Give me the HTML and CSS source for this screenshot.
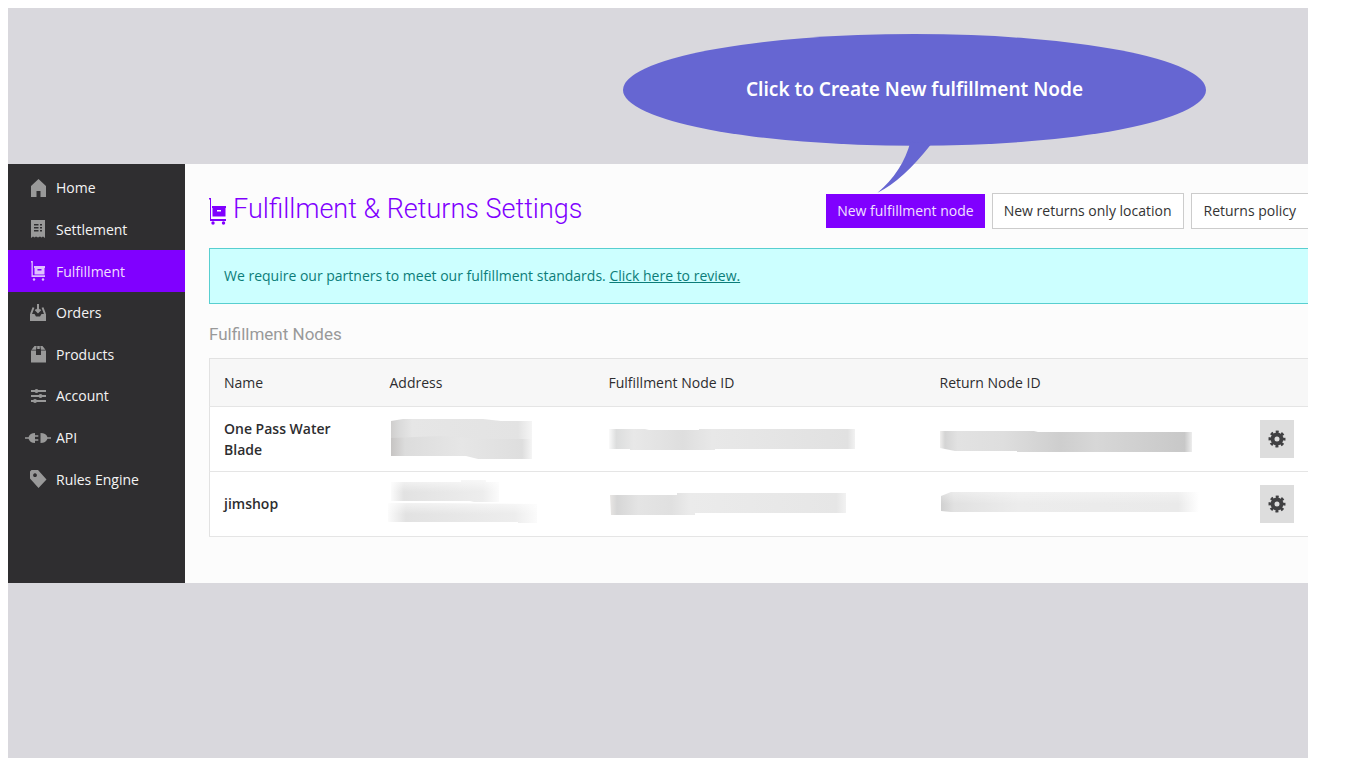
FILE: index.html
```html
<!DOCTYPE html>
<html lang="en">
<head>
<meta charset="utf-8">
<title>Fulfillment &amp; Returns Settings</title>
<link rel="stylesheet" href="styles.css">
</head>
<body>
<div class="stage">
  <div class="panel">
    <nav class="sidebar" aria-label="Main">
      <a class="nav-item" href="#"><svg class="nav-icon" viewBox="0 0 26 20"><path d="M13.500 1l7.500 7v11h-5.500v-6h-4v6H6V8z"/></svg>Home</a>
      <a class="nav-item" href="#"><svg class="nav-icon" viewBox="0 0 26 20"><path fill-rule="evenodd" d="M6 1h14v18l-2-1.500-1.500 1-1.500-1-2 1-2-1-1.500 1-1.500-1L6 19zM9 5v1.500h4.500V5zm0 3v1.500h4.500V8zm0 3v1.500h4.500V11zm6-6v1.500h2V5zm0 3v1.500h2V8zm0 3v1.500h2V11z"/></svg>Settlement</a>
      <a class="nav-item active" href="#" aria-current="page"><svg class="nav-icon" viewBox="0 0 26 20"><path fill-rule="evenodd" d="M6 0h1.800v14.300H20V16H6.500V1.500H6zM9 5h11v2h-.5v6.500H9.500V7H9zm3.500 3v1.500h4V8z"/><circle cx="9" cy="18.500" r="1.200"/><circle cx="18" cy="18.500" r="1.200"/></svg>Fulfillment</a>
      <a class="nav-item" href="#"><svg class="nav-icon" viewBox="0 0 26 20"><path d="M5 11h4.500l1.500 2.500h4l1.500-2.500H21v7H5z"/><path class="line" d="M13 1v8M10.500 6.500L13 9l2.500-2.500M8.500 4.500L6 11M17.500 4.500L20 11"/></svg>Orders</a>
      <a class="nav-item" href="#"><svg class="nav-icon" viewBox="0 0 26 20"><path d="M6 6.500h5V11h5V6.500h5v12H6zM6.500 5.700L9.500 2h2.200L11 5.700zM20.500 5.700L17.500 2h-2.200l.7 3.700z"/><path d="M12.200 2h2.600v3h-2.600z"/></svg>Products</a>
      <a class="nav-item" href="#"><svg class="nav-icon" viewBox="0 0 26 20"><path class="thin" d="M6 5h15M6 10h15M6 15h15"/><circle cx="11.500" cy="5" r="2"/><circle cx="15.500" cy="10" r="2"/><circle cx="10" cy="15" r="2"/></svg>Account</a>
      <a class="nav-item" href="#"><svg class="nav-icon" viewBox="0 0 26 20"><path d="M0 9.200h3.500Q5 5 10 5v2.200h3.300v1.500H10v2.600h3.300v1.500H10V15q-5 0-6.500-4.200H0zM15.500 5q5.500 0 7 4.200H26v1.600h-3.500q-1.500 4.200-7 4.200z"/></svg>API</a>
      <a class="nav-item" href="#"><svg class="nav-icon" viewBox="0 0 26 20"><path fill-rule="evenodd" d="M5 2.500L6.500 1H13l8.500 9.500L13.500 19 5 9.500zm5 1.800a1.900 1.900 0 1 0 .01 0z"/></svg>Rules Engine</a>
    </nav>
    <main class="content">
      <header class="page-head">
        <h1 class="title"><svg class="title-icon" viewBox="0 0 18 28"><path fill-rule="evenodd" d="M0 1h2v21h15v2H1V2.500H0zM3 9h14v2h-.5v8.500h-13V11H3zm5 4v1.500h4V13z"/><circle cx="4" cy="26" r="1.700"/><circle cx="14.500" cy="26" r="1.700"/></svg>Fulfillment &amp; Returns Settings</h1>
        <div class="actions">
          <button class="btn primary" type="button">New fulfillment node</button>
          <button class="btn" type="button">New returns only location</button>
          <button class="btn last" type="button">Returns policy</button>
        </div>
      </header>
      <p class="notice">We require our partners to meet our fulfillment standards. <a href="#">Click here to review.</a></p>
      <h2 class="subtitle">Fulfillment Nodes</h2>
      <table class="nodes">
        <colgroup><col class="col-name"><col class="col-address"><col class="col-id"><col><col class="col-action"></colgroup>
        <thead>
          <tr><th scope="col">Name</th><th scope="col">Address</th><th scope="col">Fulfillment Node ID</th><th scope="col">Return Node ID</th><td></td></tr>
        </thead>
        <tbody>
          <tr>
            <th scope="row">One Pass Water Blade</th>
            <td><svg class="smudge" width="150" height="44" viewBox="0 0 150 44"><defs><linearGradient id="a1"><stop offset="0" stop-color="#cfcecd"/><stop offset=".06" stop-color="#dadada"/><stop offset=".15" stop-color="#e6e6e6"/><stop offset=".9" stop-color="#e3e3e3"/><stop offset="1" stop-color="#f5f5f5"/></linearGradient><linearGradient id="a1b"><stop offset="0" stop-color="#c6c4c3"/><stop offset=".1" stop-color="#dcdcdc"/><stop offset=".5" stop-color="#e6e6e6"/><stop offset=".93" stop-color="#dedede"/><stop offset="1" stop-color="#f5f5f5"/></linearGradient></defs><path fill="url(#a1)" d="M1 4l12-2h80l18 2h31v18H1z"/><path fill="url(#a1b)" d="M1 21l50-2 44 3h47v20H88l-12-3H1z"/></svg></td>
            <td><svg class="smudge" width="250" height="24" viewBox="0 0 250 24"><defs><linearGradient id="b1"><stop offset="0" stop-color="#fafafa"/><stop offset=".03" stop-color="#dcdddd"/><stop offset=".1" stop-color="#e8e8e8"/><stop offset=".3" stop-color="#dedede"/><stop offset=".42" stop-color="#e8e8e8"/><stop offset=".97" stop-color="#e1e1e1"/><stop offset="1" stop-color="#f2f2f2"/></linearGradient></defs><path fill="url(#b1)" d="M0 2h36l4 1h50V2h156v20H106v1H21v-1H0z"/></svg></td>
            <td><svg class="smudge" width="262" height="24" viewBox="0 0 262 24"><defs><linearGradient id="c1"><stop offset="0" stop-color="#f0efee"/><stop offset=".02" stop-color="#d4d4d4"/><stop offset=".07" stop-color="#e2e2e2"/><stop offset=".25" stop-color="#dedede"/><stop offset=".48" stop-color="#cecece"/><stop offset=".62" stop-color="#d7d7d7"/><stop offset=".97" stop-color="#c8c8c8"/><stop offset="1" stop-color="#ededed"/></linearGradient></defs><path fill="url(#c1)" d="M0 4h94l4 1h154v20H77v-1H15L0 21z"/></svg></td>
            <td class="action"><button class="gear" type="button" aria-label="Node settings"><svg viewBox="0 0 18 18"><circle class="teeth" cx="9" cy="9" r="7"/><circle class="ring" cx="9" cy="9" r="4.500"/></svg></button></td>
          </tr>
          <tr>
            <th scope="row">jimshop</th>
            <td><svg class="smudge" width="150" height="48" viewBox="0 0 150 48"><defs><linearGradient id="a2"><stop offset="0" stop-color="#fbfbfb"/><stop offset=".12" stop-color="#e2e2e2"/><stop offset=".85" stop-color="#ededed"/><stop offset="1" stop-color="#fbfbfb"/></linearGradient><linearGradient id="fade" x2="0" y2="1"><stop offset="0" stop-color="#fff" stop-opacity=".6"/><stop offset=".6" stop-color="#fff" stop-opacity="0"/></linearGradient></defs><path fill="url(#a2)" d="M1 2h70V0h25v2h13v20H84l-4-1H1z"/><path fill="url(#fade)" d="M0 0h110v20H0z"/><path fill="url(#a2)" d="M-2 23h48l101 1v19h-19v-1H-2z"/><path fill="url(#fade)" d="M-2 22h150v20H-2z"/></svg></td>
            <td><svg class="smudge" width="250" height="24" viewBox="0 0 250 24"><defs><linearGradient id="b2"><stop offset="0" stop-color="#e8e6e4"/><stop offset=".03" stop-color="#d6d6d6"/><stop offset=".12" stop-color="#e4e4e4"/><stop offset=".26" stop-color="#e0e0e0"/><stop offset=".34" stop-color="#ebebeb"/><stop offset=".96" stop-color="#e6e6e6"/><stop offset="1" stop-color="#f2f2f2"/></linearGradient></defs><path fill="url(#b2)" d="M1 3h67V1h169v20H86v2H2z"/></svg></td>
            <td><svg class="smudge" width="262" height="24" viewBox="0 0 262 24"><defs><linearGradient id="c2"><stop offset="0" stop-color="#d0d0d0"/><stop offset=".05" stop-color="#e1e1e1"/><stop offset=".3" stop-color="#ececec"/><stop offset=".92" stop-color="#eaeaea"/><stop offset="1" stop-color="#fff"/></linearGradient></defs><path fill="url(#c2)" d="M1 4l10-4h248v20H11l-10-1z"/><path fill="url(#fade)" d="M0 0h262v20H0z" opacity=".6"/></svg></td>
            <td class="action"><button class="gear" type="button" aria-label="Node settings"><svg viewBox="0 0 18 18"><circle class="teeth" cx="9" cy="9" r="7"/><circle class="ring" cx="9" cy="9" r="4.500"/></svg></button></td>
          </tr>
        </tbody>
      </table>
    </main>
  </div>
  <div class="callout">
    <svg class="bubble" viewBox="0 0 584 160"><ellipse cx="292" cy="56" rx="292" ry="56"/><path d="M288 108Q280 138 255 159Q280 147 309 110z"/></svg>
    <p class="callout-text">Click to Create New fulfillment Node</p>
  </div>
</div>
</body>
</html>
```
FILE: styles.css
```css
* { box-sizing: border-box; }

body {
  margin: 8px 42px 8px 8px;
  font: 14px/21px "Open Sans", "Noto Sans", sans-serif;
  color: #2d2d2f;
  background: #fff;
}

.stage {
  position: relative;
  min-height: calc(100vh - 16px);
  padding-top: 156px;
  background: #d9d8dd;
}

.panel {
  display: flex;
  min-height: 419px;
  background: #fcfcfc;
}

.sidebar {
  flex: 0 0 177px;
  display: grid;
  grid-template-rows: repeat(8, 1fr);
  padding: 3px 0 83px;
  background: #2f2e30;
}

.nav-item {
  display: flex;
  align-items: center;
  gap: 5px;
  padding-left: 17px;
  color: #f4f4f4;
  text-decoration: none;
}

.nav-icon { width: 26px; height: 20px; fill: #999; }
.nav-icon .line { fill: none; stroke: #999; stroke-width: 2; }
.nav-icon .thin { fill: none; stroke: #999; stroke-width: 2; }
.active { background: #8000ff; color: #f0dcff; }
.active .nav-icon { fill: #dfc0ff; }

.content { flex: 1; min-width: 0; padding: 26px 0 0 24px; }

.page-head {
  display: flex;
  justify-content: space-between;
  align-items: center;
}

.title {
  display: flex;
  align-items: center;
  gap: 6px;
  margin: 0;
  padding-bottom: 4px;
  font: 300 27px/38px Roboto, sans-serif;
  color: #8000ff;
}

.title-icon { width: 18px; height: 28px; margin-top: 4px; fill: #8000ff; }

.actions { display: flex; align-items: center; gap: 7px; }

.btn {
  height: 36px;
  padding: 0 11px 2px;
  border: 1px solid #ccc;
  background: #fff;
  color: #333;
  font: inherit;
  white-space: nowrap;
}

.primary { height: 34px; border: 0; background: #8000ff; color: #f2e0ff; }
.last { padding: 0 12px 2px; border-right: 0; }

.notice {
  margin: 16px 0 0;
  padding: 16px 14px 17px;
  border: 1px solid #58cfd0;
  border-right: 0;
  background: #cff;
  color: #0b7d79;
}

.notice a { color: inherit; }

.subtitle {
  margin: 18px 0 12px;
  font: 400 17px/24px Roboto, sans-serif;
  color: #999;
}

.nodes {
  width: 100%;
  table-layout: fixed;
  border-collapse: collapse;
  border: 1px solid #e2e2e2;
  border-right: 0;
  background: #fff;
}

.col-name { width: 166px; }
.col-address { width: 219px; }
.col-id { width: 331px; }
.col-action { width: 64px; }

.nodes tr { height: 65px; border-bottom: 1px solid #e5e5e5; }
.nodes thead tr { height: 48px; background: #f7f7f7; }
.nodes th, .nodes td { padding: 0 14px 1px; text-align: left; }
.nodes th { font-weight: 600; }
.nodes thead th { font-weight: 400; }
.nodes .action { text-align: right; }

.smudge { display: block; overflow: visible; }

.gear {
  width: 34px;
  height: 38px;
  padding: 0;
  border: 0;
  background: #ddd;
  vertical-align: middle;
}

.gear svg { display: block; width: 18px; height: 18px; margin: 0 auto; fill: none; stroke: #404042; }
.teeth { stroke-width: 3; stroke-dasharray: 2.900 2.598; stroke-dashoffset: 1.450; }
.ring { stroke-width: 4; }

.callout {
  position: absolute;
  top: 26px;
  left: 615px;
  width: 583px;
}

.bubble { display: block; width: 100%; fill: #6666d2; }

.callout-text {
  position: absolute;
  top: 42px;
  left: 0;
  width: 100%;
  margin: 0;
  text-align: center;
  font: 600 19px/26px "Noto Sans", sans-serif;
  color: #fff;
}
```
